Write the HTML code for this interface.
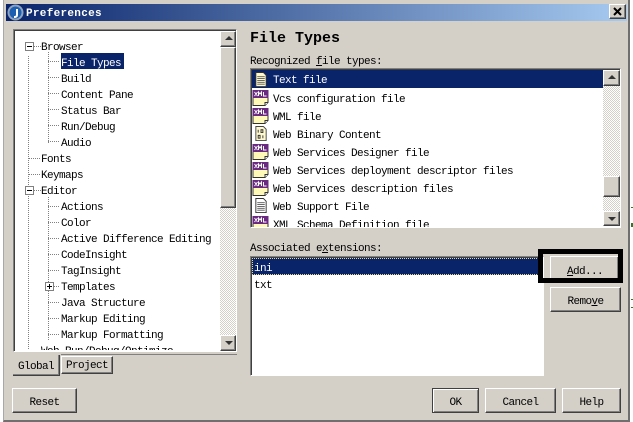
<!DOCTYPE html>
<html><head><meta charset="utf-8"><style>
html,body{margin:0;padding:0;width:633px;height:422px;overflow:hidden;background:#fff}
*{box-sizing:border-box}
#w{position:absolute;left:0;top:0;width:633px;height:422px;overflow:hidden;font:11px/14px "Liberation Mono","Noto Sans CJK SC",monospace;letter-spacing:-.6px;color:#000;-webkit-font-smoothing:none}
.a{position:absolute}
.t{position:absolute;white-space:pre;margin-top:2px}
.b{position:absolute;background:#d4d0c8;border:1px solid;border-color:#fff #404040 #404040 #fff;box-shadow:inset -1px -1px 0 #808080}
.c{position:absolute;text-align:center;left:0;right:0;white-space:pre;margin-top:2px}
.d{position:absolute;background-image:repeating-linear-gradient(0deg,#808080 0 1px,transparent 1px 2px)}
.h{position:absolute;background-image:repeating-linear-gradient(90deg,#808080 0 1px,transparent 1px 2px);height:1px}
.tk{position:absolute;background:repeating-conic-gradient(#d4d0c8 0 25%,#fff 0 50%) 0 0/2px 2px}
.up:after,.dn:after{content:"";position:absolute;left:4px;border-left:4px solid transparent;border-right:4px solid transparent}
.up:after{top:4px;border-bottom:4px solid #333}
.dn:after{top:5px;border-top:4px solid #333}
.in{position:absolute;background:#fff;border:1px solid;border-color:#808080 #fff #fff #808080;box-shadow:inset 1px 1px 0 #404040;overflow:hidden}
u{text-decoration:underline}
</style></head><body><div id="w">
<svg width="0" height="0" style="position:absolute"><defs>
<symbol id="x" viewBox="0 0 16 16"><path d="M.5 6.500h15v6l-3 3H.5z" fill="#fff9b8" stroke="#333"/><path d="M12.500 15.500v-3h3" fill="#fff" stroke="#333"/><rect x="0" y="0" width="16" height="8" fill="#6a2a80"/><path d="M2 2l3 4M5 2l-3 4M6 6V2l1.500 2L9 2v4M11 2v4h3" stroke="#fff" fill="none"/></symbol>
<symbol id="p" viewBox="0 0 14 16"><path d="M1.500.5h8l3 3v12h-11z" fill="#fff" stroke="#333"/><path d="M3 5h8M3 7h8M3 9h8M3 11h8M3 13h8" stroke="#555"/></symbol>
<symbol id="q" viewBox="0 0 14 16"><path d="M1.500.5h8l3 3v12h-11z" fill="#fff9d0" stroke="#333"/><path d="M3 5h8M3 7h8M3 9h8M3 11h8M3 13h8" stroke="#555"/></symbol>
<symbol id="n" viewBox="0 0 14 16"><path d="M1.500.5h8l3 3v12h-11z" fill="#fff9d0" stroke="#444"/><path d="M4 4v3M7 4h2v3H7zM4 10h2v3H4zM9 10v3" stroke="#333" fill="none"/></symbol>
</defs></svg>

<!-- window frame -->
<div class="a" style="left:3px;top:0;width:627px;height:422px;background:#d4d0c8;border-left:1px solid #a8a8a8;border-right:2px solid #6f6f6f;border-bottom:2px solid #6f6f6f"></div>
<div class="a" style="left:6px;top:4px;width:621px;height:17px;background:linear-gradient(90deg,#0a246a,#a6caf0)"></div>
<svg class="a" style="left:7px;top:4px" width="17" height="17" viewBox="0 0 17 17"><circle cx="8.500" cy="8.500" r="8" fill="#8fa3bd"/><circle cx="8.500" cy="8.500" r="6" fill="#1d5fb0"/><path d="M10 5v6q0 2-3 2" stroke="#fff" stroke-width="2" fill="none"/></svg>
<div class="t" style="left:26px;top:5px;color:#fff;font-weight:bold;font-size:11px;letter-spacing:.3px">Preferences</div>
<div class="b" style="left:609px;top:4px;width:17px;height:15px"><svg class="a" style="left:3px;top:2px" width="10" height="9"><path d="M1 1l7 7M8 1l-7 7" stroke="#000" stroke-width="2"/></svg></div>

<!-- tree -->
<div class="in" style="left:13px;top:29px;width:224px;height:323px"></div>
<div class="a" style="left:15px;top:31px;width:205px;height:319px;overflow:hidden">
<div class="d" style="left:13px;top:24px;width:1px;height:300px"></div>
<div class="d" style="left:33px;top:20px;width:1px;height:92px"></div>
<div class="d" style="left:33px;top:165px;width:1px;height:144px"></div>
<div class="h" style="left:19px;top:15px;width:7px"></div>
<div class="h" style="left:14px;top:127px;width:11px"></div>
<div class="h" style="left:14px;top:143px;width:11px"></div>
<div class="h" style="left:19px;top:159px;width:7px"></div>
<div class="h" style="left:14px;top:319px;width:11px"></div>
<div class="h" style="left:33px;top:30px;width:12px"></div><div class="h" style="left:33px;top:46px;width:12px"></div><div class="h" style="left:33px;top:62px;width:12px"></div><div class="h" style="left:33px;top:78px;width:12px"></div><div class="h" style="left:33px;top:94px;width:12px"></div><div class="h" style="left:33px;top:110px;width:12px"></div>
<div class="h" style="left:33px;top:175px;width:12px"></div><div class="h" style="left:33px;top:191px;width:12px"></div><div class="h" style="left:33px;top:207px;width:12px"></div><div class="h" style="left:33px;top:223px;width:12px"></div><div class="h" style="left:33px;top:239px;width:12px"></div><div class="h" style="left:39px;top:255px;width:6px"></div><div class="h" style="left:33px;top:271px;width:12px"></div><div class="h" style="left:33px;top:287px;width:12px"></div><div class="h" style="left:33px;top:303px;width:12px"></div>
<div class="a" style="left:10px;top:11px;width:9px;height:9px;background:#fff;border:1px solid #808080"><div class="a" style="left:1px;top:3px;width:5px;height:1px;background:#000"></div></div>
<div class="a" style="left:10px;top:155px;width:9px;height:9px;background:#fff;border:1px solid #808080"><div class="a" style="left:1px;top:3px;width:5px;height:1px;background:#000"></div></div>
<div class="a" style="left:30px;top:251px;width:9px;height:9px;background:#fff;border:1px solid #808080"><div class="a" style="left:1px;top:3px;width:5px;height:1px;background:#000"></div><div class="a" style="left:3px;top:1px;width:1px;height:5px;background:#000"></div></div>
<div class="a" style="left:46px;top:22px;width:63px;height:16px;background:#0a246a"></div>
<div class="t" style="left:26px;top:8px">Browser</div>
<div class="t" style="left:46px;top:24px;color:#fff">File Types</div>
<div class="t" style="left:46px;top:40px">Build</div>
<div class="t" style="left:46px;top:56px">Content Pane</div>
<div class="t" style="left:46px;top:72px">Status Bar</div>
<div class="t" style="left:46px;top:88px">Run/Debug</div>
<div class="t" style="left:46px;top:104px">Audio</div>
<div class="t" style="left:26px;top:120px">Fonts</div>
<div class="t" style="left:26px;top:136px">Keymaps</div>
<div class="t" style="left:26px;top:152px">Editor</div>
<div class="t" style="left:46px;top:168px">Actions</div>
<div class="t" style="left:46px;top:184px">Color</div>
<div class="t" style="left:46px;top:200px">Active Difference Editing</div>
<div class="t" style="left:46px;top:216px">CodeInsight</div>
<div class="t" style="left:46px;top:232px">TagInsight</div>
<div class="t" style="left:46px;top:248px">Templates</div>
<div class="t" style="left:46px;top:264px">Java Structure</div>
<div class="t" style="left:46px;top:280px">Markup Editing</div>
<div class="t" style="left:46px;top:296px">Markup Formatting</div>
<div class="t" style="left:26px;top:312px">Web Run/Debug/Optimize</div>
</div>
<div class="tk" style="left:220px;top:31px;width:16px;height:319px"></div>
<div class="b up" style="left:220px;top:31px;width:16px;height:16px"></div>
<div class="b" style="left:220px;top:47px;width:16px;height:161px"></div>
<div class="b dn" style="left:220px;top:335px;width:16px;height:16px"></div>

<!-- tabs -->
<div class="a" style="left:61px;top:354px;width:176px;height:1px;background:#808080"></div>
<div class="a" style="left:13px;top:355px;width:47px;height:21px;border-bottom:1px solid #404040;border-right:1px solid #404040;box-shadow:inset -1px -1px 0 #808080"><div class="t" style="left:5px;top:3px">Global</div></div>
<div class="b" style="left:61px;top:356px;width:52px;height:18px"><div class="t" style="left:4px;top:0">Project</div></div>

<div class="b" style="left:12px;top:388px;width:65px;height:25px"><div class="c" style="top:5px">Reset</div></div>

<!-- right -->
<div class="t" style="left:250px;top:28px;font-size:15px;line-height:17px;font-weight:bold;letter-spacing:0">File Types</div>
<div class="t" style="left:250px;top:53px">Recognized <u>f</u>ile types:</div>

<div class="in" style="left:250px;top:68px;width:371px;height:160px"></div>
<div class="a" style="left:252px;top:70px;width:351px;height:157px;overflow:hidden">
<div class="a" style="left:0;top:0;width:351px;height:18px;background:#0a246a"></div>
<svg class="a" style="left:2px;top:2px" width="14" height="15"><use href="#q"/></svg>
<svg class="a" style="left:0;top:20px" width="17" height="16"><use href="#x"/></svg>
<svg class="a" style="left:0;top:38px" width="17" height="16"><use href="#x"/></svg>
<svg class="a" style="left:2px;top:56px" width="14" height="15"><use href="#n"/></svg>
<svg class="a" style="left:0;top:74px" width="17" height="16"><use href="#x"/></svg>
<svg class="a" style="left:0;top:92px" width="17" height="16"><use href="#x"/></svg>
<svg class="a" style="left:0;top:110px" width="17" height="16"><use href="#x"/></svg>
<svg class="a" style="left:2px;top:128px" width="14" height="15"><use href="#p"/></svg>
<svg class="a" style="left:0;top:146px" width="17" height="16"><use href="#x"/></svg>
<div class="t" style="left:21px;top:2px;color:#fff">Text file</div>
<div class="t" style="left:21px;top:21px">Vcs configuration file</div>
<div class="t" style="left:21px;top:39px">WML file</div>
<div class="t" style="left:21px;top:57px">Web Binary Content</div>
<div class="t" style="left:21px;top:75px">Web Services Designer file</div>
<div class="t" style="left:21px;top:93px">Web Services deployment descriptor files</div>
<div class="t" style="left:21px;top:111px">Web Services description files</div>
<div class="t" style="left:21px;top:129px">Web Support File</div>
<div class="t" style="left:21px;top:147px">XML Schema Definition file</div>
</div>
<div class="tk" style="left:603px;top:70px;width:17px;height:156px"></div>
<div class="b up" style="left:603px;top:70px;width:17px;height:16px"></div>
<div class="b" style="left:603px;top:176px;width:17px;height:21px"></div>
<div class="b dn" style="left:603px;top:211px;width:17px;height:15px"></div>

<div class="t" style="left:250px;top:240px">Associated e<u>x</u>tensions:</div>
<div class="in" style="left:250px;top:256px;width:294px;height:120px"></div>
<div class="a" style="left:252px;top:258px;width:291px;height:17px;background:#0a246a;outline:1px dotted #f0d880;outline-offset:-1px"></div>
<div class="t" style="left:254px;top:260px;color:#fff">ini</div>
<div class="t" style="left:254px;top:277px">txt</div>

<div class="b" style="left:550px;top:256px;width:69px;height:24px"><div class="t" style="left:16px;top:6px"><u>A</u>dd...</div></div>
<div class="a" style="left:538px;top:249px;width:85px;height:34px;border:5px solid #000"></div>
<div class="b" style="left:550px;top:287px;width:71px;height:25px"><div class="c" style="top:5px">Remo<u>v</u>e</div></div>

<div class="b" style="left:432px;top:388px;width:47px;height:25px;border-color:#404040;box-shadow:inset 1px 1px 0 #fff,inset -1px -1px 0 #808080"><div class="c" style="top:5px">OK</div></div>
<div class="b" style="left:485px;top:388px;width:71px;height:25px"><div class="c" style="top:5px">Cancel</div></div>
<div class="b" style="left:562px;top:388px;width:59px;height:25px"><div class="c" style="top:5px">Help</div></div>

<!-- green fragments at right edge -->
<div class="a" style="left:631px;top:207px;width:2px;height:1px;background:#2a7a2a"></div>
<div class="a" style="left:631px;top:223px;width:2px;height:4px;background:#2a7a2a"></div>
<div class="a" style="left:631px;top:299px;width:2px;height:1px;background:#2a7a2a"></div>
<div class="a" style="left:631px;top:307px;width:2px;height:1px;background:#2a7a2a"></div>
</div></body></html>
